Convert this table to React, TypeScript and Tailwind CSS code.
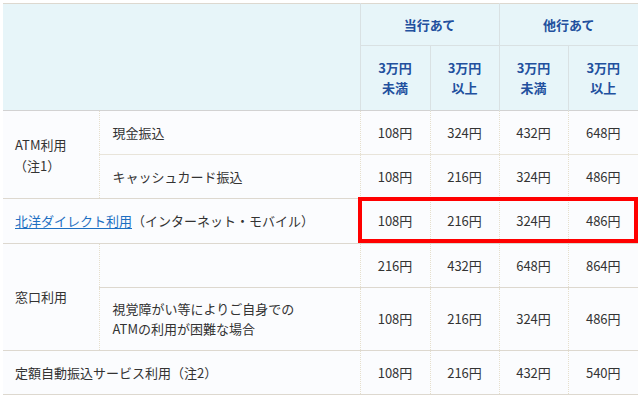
const font = { fontFamily: '"Noto Sans CJK JP", "Noto Sans", sans-serif' }

const rows = [
  { prices: ["108円", "324円", "432円", "648円"] },
  { prices: ["108円", "216円", "324円", "486円"] },
  { prices: ["108円", "216円", "324円", "486円"] },
  { prices: ["216円", "432円", "648円", "864円"] },
  { prices: ["108円", "216円", "324円", "486円"] },
  { prices: ["108円", "216円", "432円", "540円"] },
]

function Prices({ values }: { values: string[] }) {
  return (
    <>
      {values.map((v, i) => (
        <td key={i} className="border-l border-dotted border-l-[#e6dfcc] text-center">
          {v}
        </td>
      ))}
    </>
  )
}

export default function App() {
  return (
    <div className="w-[640px] h-[397px] bg-white pt-[3px] pl-[3px]" style={font}>
      <div className="relative w-[635px]">
        <table className="w-[635px] table-fixed border-collapse text-[13px] leading-[20px] text-[#333]">
          <colgroup>
            <col className="w-[96px]" />
            <col className="w-[261px]" />
            <col className="w-[70px]" />
            <col className="w-[69px]" />
            <col className="w-[69px]" />
            <col className="w-[70px]" />
          </colgroup>
          <thead className="bg-[#e7f5f9] text-[#22509e] font-bold">
            <tr className="h-[42px] border-t border-t-[#ddd8cf]">
              <th colSpan={2} rowSpan={2} className="border-b border-b-[#d2d2d2]"></th>
              <th colSpan={2} className="border-l border-l-[#d9e1e3] border-b border-b-[#d9e1e3] font-bold">
                当行あて
              </th>
              <th colSpan={2} className="border-l border-l-[#d9e1e3] border-b border-b-[#d9e1e3] font-bold">
                他行あて
              </th>
            </tr>
            <tr className="h-[65px] border-b border-b-[#d2d2d2]">
              <th className="border-l border-l-[#d9e1e3] font-bold">3万円<br />未満</th>
              <th className="border-l border-l-[#d9e1e3] font-bold">3万円<br />以上</th>
              <th className="border-l border-l-[#d9e1e3] font-bold">3万円<br />未満</th>
              <th className="border-l border-l-[#d9e1e3] font-bold">3万円<br />以上</th>
            </tr>
          </thead>
          <tbody className="bg-[#fbfcfe]">
            <tr className="h-[44px] border-b border-b-[#e8e4da]">
              <td rowSpan={2} className="pl-[12px] leading-[21px] border-b border-b-[#ddd8cf]">
                ATM利用
                <br />
                <span className="-ml-[1px]">（注1）</span>
              </td>
              <td className="border-l border-dotted border-l-[#e6dfcc] pl-[13px]">現金振込</td>
              <Prices values={rows[0].prices} />
            </tr>
            <tr className="h-[44px] border-b border-b-[#ddd8cf]">
              <td className="border-l border-dotted border-l-[#e6dfcc] pl-[13px]">キャッシュカード振込</td>
              <Prices values={rows[1].prices} />
            </tr>
            <tr className="h-[45px] border-b border-b-[#ddd8cf]">
              <td colSpan={2} className="pl-[12px]">
                <a className="text-[#1d6fc2] underline underline-offset-2">北洋ダイレクト利用</a>
                （インターネット・モバイル）
              </td>
              <Prices values={rows[2].prices} />
            </tr>
            <tr className="h-[44px] border-b border-b-[#ddd8cf]">
              <td rowSpan={2} className="pl-[12px] border-b border-b-[#ddd8cf]">窓口利用</td>
              <td className="border-l border-dotted border-l-[#e6dfcc]"></td>
              <Prices values={rows[3].prices} />
            </tr>
            <tr className="h-[63px] border-b border-b-[#ddd8cf]">
              <td className="border-l border-dotted border-l-[#e6dfcc] pl-[13px]">
                視覚障がい等によりご自身での
                <br />
                ATMの利用が困難な場合
              </td>
              <Prices values={rows[4].prices} />
            </tr>
            <tr className="h-[44px] border-b border-b-[#ddd8cf]">
              <td colSpan={2} className="pl-[12px]">定額自動振込サービス利用（注2）</td>
              <Prices values={rows[5].prices} />
            </tr>
          </tbody>
        </table>
        {/* highlight */}
        <div className="absolute left-[355px] top-[194px] w-[280px] h-[46px] border-4 border-[#ff0000] pointer-events-none" />
      </div>
    </div>
  )
}
